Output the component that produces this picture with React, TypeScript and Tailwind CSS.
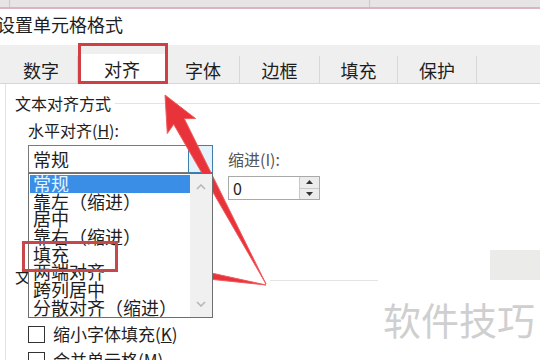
import React from "react";

const tabs = [
  { label: "数字", w: "w-[73px]" },
  { label: "对齐", w: "w-[89px]", active: true },
  { label: "字体", w: "w-[73px]" },
  { label: "边框", w: "w-[80px]" },
  { label: "填充", w: "w-[78px]" },
  { label: "保护", w: "w-[79px]" },
];

const options = ["常规", "靠左（缩进）", "居中", "靠右（缩进）", "填充", "两端对齐", "跨列居中", "分散对齐（缩进）"];

const Arrows = () => (
  <svg className="absolute left-0 top-0 pointer-events-none" width={540} height={360}>
    <polygon
      points="165,95 195.5,118.5 184.3,118.7 266,284 173.7,124.3 167.3,133.5"
      fill="#e8333a"
      stroke="#f05a5e"
      strokeWidth={1}
      strokeLinejoin="round"
    />
    <polygon
      points="130,263 164.9,254.5 162.6,262.3 266,285 160.6,274.1 160.4,282.1"
      fill="#e8333a"
      stroke="#f05a5e"
      strokeWidth={1}
      strokeLinejoin="round"
    />
  </svg>
);

export default function App() {
  return (
    <div className="relative w-[540px] h-[360px] overflow-hidden bg-white text-[#1e1e1e] font-['Noto_Sans_CJK_SC','Noto_Sans',sans-serif]">
      {/* strip of the window behind */}
      <div className="h-[9px] bg-[#e7e4e6] border-b-2 border-[#dbb3c1] flex">
        <div className="w-[10px] border-r border-[#c9c9c9]" />
        <div className="w-[360px] border-r border-[#c9c9c9]" />
      </div>

      <div className="h-[36px] -ml-[3px] text-[18px] leading-[30px]">设置单元格格式</div>

      {/* tabs */}
      <div className="h-[39px] bg-[#efefef] border-b border-[#d6d6d6] flex items-end pl-[5px]">
        {tabs.map((t) => (
          <div
            key={t.label}
            className={`${t.w} h-[27px] flex items-center justify-center text-[18px] leading-none border-r border-[#d8d8d8] ${
              t.active ? "bg-white h-[29px]" : ""
            }`}
          >
            {t.label}
          </div>
        ))}
      </div>

      {/* panel */}
      <div className="ml-[5px] border-l border-[#e2e2e2] h-[300px] flex flex-col">
        <div className="mt-[9px] h-[20px] flex items-center pl-[9px]">
          <span className="text-[16px] leading-[20px]">文本对齐方式</span>
          <div className="flex-1 ml-[4px] border-t border-[#e3e3e3]" />
        </div>

        <div className="mt-[7px] pl-[22px] text-[16px] leading-[20px]">
          水平对齐(<span className="underline">H</span>):
        </div>

        <div className="mt-[5px] pl-[22px] flex">
          <div className="relative w-[185px]">
            <div className="h-[28px] border border-[#7a7a7a] flex bg-white">
              <div className="flex-1 pl-[4px] text-[18px] leading-[26px]">常规</div>
              <div className="w-[25px] -my-px -mr-px border border-[#3c7fb1] bg-[#e5f1fb]" />
            </div>
            {/* open dropdown list */}
            <div className="absolute left-0 top-[28px] w-[185px] h-[145px] border border-[#6e6e6e] bg-white flex z-10">
              <div className="flex-1 pt-px pl-px">
                {options.map((o, i) => (
                  <div
                    key={o}
                    className={`h-[17.7px] pl-[3px] text-[18px] leading-[17.7px] whitespace-nowrap ${
                      i === 0 ? "bg-[#3a8ee6] text-[#e4f4ff]" : ""
                    }`}
                  >
                    {o}
                  </div>
                ))}
              </div>
              <div className="w-[22px] bg-[#f0f0f0] flex flex-col items-center justify-between py-[10px] text-[#b8b8b8]">
                <svg width="10" height="6" viewBox="0 0 10 6">
                  <path d="M1 5 L5 1 L9 5" fill="none" stroke="#b5b5b5" strokeWidth="1.5" />
                </svg>
                <svg width="10" height="6" viewBox="0 0 10 6">
                  <path d="M1 1 L5 5 L9 1" fill="none" stroke="#b5b5b5" strokeWidth="1.5" />
                </svg>
              </div>
            </div>
          </div>

          <div className="ml-[15px] flex flex-col">
            <div className="mt-[5px] text-[16px] leading-[18px] text-[#555]">缩进(I):</div>
            <div className="mt-[8px] w-[92px] h-[24px] border border-[#a9a9a9] flex">
              <div className="flex-1 pl-[4px] text-[16px] leading-[22px]">0</div>
              <div className="w-[20px] border-l border-[#c9c9c9] flex flex-col">
                <div className="flex-1 bg-[#ececec] border-b border-[#c9c9c9] flex items-center justify-center">
                  <svg width="7" height="4" viewBox="0 0 7 4">
                    <path d="M0 4 L3.5 0 L7 4 Z" fill="#333" />
                  </svg>
                </div>
                <div className="flex-1 bg-[#ececec] flex items-center justify-center">
                  <svg width="7" height="4" viewBox="0 0 7 4">
                    <path d="M0 0 L3.5 4 L7 0 Z" fill="#333" />
                  </svg>
                </div>
              </div>
            </div>
          </div>
        </div>

        <div className="mt-[66px] pl-[9px] text-[16px] leading-[20px]">文本控制</div>

        <div className="mt-[39px] pl-[22px] flex items-center h-[18px]">
          <div className="w-[17px] h-[17px] border border-[#333] bg-white" />
          <span className="ml-[8px] text-[17px] leading-[18px]">
            缩小字体填充(<span className="underline">K</span>)
          </span>
        </div>
        <div className="mt-[8px] pl-[22px] flex items-center h-[18px]">
          <div className="w-[17px] h-[17px] border border-[#333] bg-white" />
          <span className="ml-[8px] text-[17px] leading-[18px]">
            合并单元格(<span className="underline">M</span>)
          </span>
        </div>
      </div>

      {/* stray bits of the screenshot */}
      <div className="absolute left-[490px] top-[250px] w-[50px] h-[30px] bg-[#ebebe9]" />
      <div className="absolute left-[270px] top-[280px] w-[108px] h-px bg-[#e4e4e4]" />

      {/* red callouts */}
      <div className="absolute left-[78px] top-[43px] w-[90px] h-[41px] border-[3px] border-[#cf3f44]" />
      <div className="absolute left-[22px] top-[241px] w-[96px] h-[31px] border-[3px] border-[#c8474b] z-20" />
      <Arrows />

      <div className="absolute left-[383px] top-[300px] text-[38px] leading-[38px] text-[#cfcfcf] tracking-[0px]">
        软件技巧
      </div>
    </div>
  );
}
